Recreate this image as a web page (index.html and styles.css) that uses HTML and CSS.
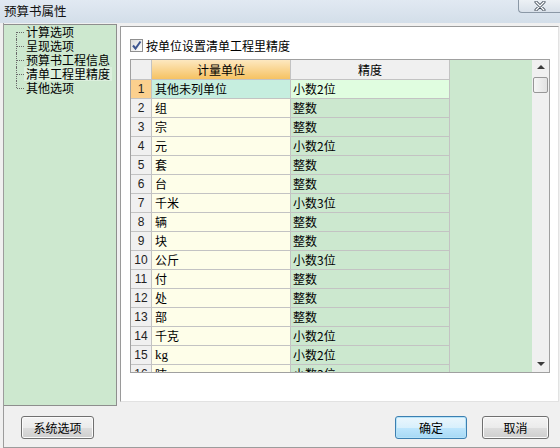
FILE: index.html
```html
<!DOCTYPE html>
<html lang="zh">
<head>
<meta charset="utf-8">
<title>预算书属性</title>
<link rel="stylesheet" href="styles.css">
</head>
<body>
<div class="window">
  <div class="titlebar">
    <span class="title">预算书属性</span>
    <span class="close">
      <svg width="12" height="10" viewBox="0 0 12 10"><path d="M2 1 L10 9 M10 1 L2 9" stroke="#3b4653" stroke-width="3" stroke-linecap="round"/><path d="M2 1 L10 9 M10 1 L2 9" stroke="#ffffff" stroke-width="1.4" stroke-linecap="round"/></svg>
    </span>
  </div>
  <div class="client">
    <div class="main">
      <div class="tree">
        <ul class="tree-list">
          <li class="first">计算选项</li>
          <li>呈现选项</li>
          <li>预算书工程信息</li>
          <li class="sel"><span class="sel-box">清单工程里精度</span></li>
          <li class="last">其他选项</li>
        </ul>
      </div>
      <div class="pane">
        <div class="opt">
          <span class="chk"><svg width="11" height="11" viewBox="0 0 11 11"><path d="M2 5.5 L4.5 8.5 L9.5 1.5" fill="none" stroke="#3d5590" stroke-width="2"/></svg></span>
          <span class="opt-label">按单位设置清单工程里精度</span>
        </div>
        <div class="grid">
          <div class="cols">
            <div class="row head">
              <div class="c num"></div>
              <div class="c unit">计量单位</div>
              <div class="c prec">精度</div>
            </div>
            <div class="row cur">
              <div class="c num">1</div>
              <div class="c unit">其他未列单位</div>
              <div class="c prec">小数2位</div>
            </div>
            <div class="row"><div class="c num">2</div><div class="c unit">组</div><div class="c prec">整数</div></div>
            <div class="row"><div class="c num">3</div><div class="c unit">宗</div><div class="c prec">整数</div></div>
            <div class="row"><div class="c num">4</div><div class="c unit">元</div><div class="c prec">小数2位</div></div>
            <div class="row"><div class="c num">5</div><div class="c unit">套</div><div class="c prec">整数</div></div>
            <div class="row"><div class="c num">6</div><div class="c unit">台</div><div class="c prec">整数</div></div>
            <div class="row"><div class="c num">7</div><div class="c unit">千米</div><div class="c prec">小数3位</div></div>
            <div class="row"><div class="c num">8</div><div class="c unit">辆</div><div class="c prec">整数</div></div>
            <div class="row"><div class="c num">9</div><div class="c unit">块</div><div class="c prec">整数</div></div>
            <div class="row"><div class="c num">10</div><div class="c unit">公斤</div><div class="c prec">小数3位</div></div>
            <div class="row"><div class="c num">11</div><div class="c unit">付</div><div class="c prec">整数</div></div>
            <div class="row"><div class="c num">12</div><div class="c unit">处</div><div class="c prec">整数</div></div>
            <div class="row"><div class="c num">13</div><div class="c unit">部</div><div class="c prec">整数</div></div>
            <div class="row"><div class="c num">14</div><div class="c unit">千克</div><div class="c prec">小数2位</div></div>
            <div class="row"><div class="c num">15</div><div class="c unit latin">kg</div><div class="c prec">小数2位</div></div>
            <div class="row"><div class="c num">16</div><div class="c unit">吨</div><div class="c prec">小数3位</div></div>
          </div>
          <div class="filler"></div>
          <div class="vscroll">
            <span class="arrow up"></span>
            <span class="thumb"></span>
            <span class="track"></span>
            <span class="arrow down"></span>
          </div>
        </div>
      </div>
    </div>
    <div class="footer">
      <button class="btn sys">系统选项</button>
      <span class="spacer"></span>
      <button class="btn ok">确定</button>
      <button class="btn cancel">取消</button>
    </div>
  </div>
</div>
</body>
</html>
```

FILE: styles.css
```css
* { box-sizing: border-box; }
html, body { margin: 0; padding: 0; }
body {
  width: 560px;
  height: 448px;
  overflow: hidden;
  background: #f0f0f0;
  font-family: "Noto Sans CJK SC", "Liberation Sans", sans-serif;
  font-size: 12px;
  color: #000;
}
.window { width: 560px; height: 448px; display: flex; flex-direction: column; }

.titlebar {
  height: 23px;
  flex: none;
  display: flex;
  align-items: flex-start;
  background: linear-gradient(#e1e9f2, #d3dee9);
}
.title { padding: 3px 0 0 4px; line-height: 15px; font-size: 12.5px; color: #111; }
.close {
  margin-left: auto;
  width: 42px;
  height: 14px;
  margin-top: -1px;
  border: 1px solid #8b98a6;
  border-top: none;
  border-right: none;
  border-radius: 0 0 0 4px;
  background: linear-gradient(#eef2f6, #d9e1ea);
  display: flex;
  align-items: center;
  justify-content: center;
}

.client {
  flex: 1;
  margin-left: 3px;
  border-left: 1px solid #9c9c9c;
  border-bottom: 1px solid #9c9c9c;
  display: flex;
  flex-direction: column;
}
.main { display: flex; align-items: flex-start; height: 383px; }

.tree {
  width: 113px;
  height: 382px;
  margin-top: 1px;
  background: #cde8cf;
  border-top: 1px solid #8e8e8e;
  border-right: 1px solid #8e8e8e;
  border-bottom: 1px solid #8e8e8e;
}
.tree-list { list-style: none; margin: 0; padding: 0 0 0 22px; }
.tree-list li { position: relative; height: 14px; line-height: 14px; white-space: nowrap; }
.tree-list li::before {
  content: "";
  position: absolute;
  left: -10px;
  top: 0;
  height: 100%;
  border-left: 1px dotted #6a6a6a;
}
.tree-list li.first::before { top: 50%; height: 50%; }
.tree-list li.last::before { height: 50%; }
.tree-list li::after {
  content: "";
  position: absolute;
  left: -9px;
  top: 7px;
  width: 7px;
  border-top: 1px dotted #6a6a6a;
}
.sel-box { display: inline-block; margin-left: -2px; padding: 0 2px; background: #dcefdd; }

.pane {
  width: 439px;
  height: 376px;
  margin: 3px 0 0 3px;
  background: #fff;
  border-top: 1px solid #9a9a9a;
  border-left: 1px solid #9a9a9a;
  border-right: 1px solid #e2e2e2;
  border-bottom: 1px solid #e2e2e2;
  padding: 11px 0 0 9px;
}
.opt { display: flex; align-items: center; height: 15px; }
.chk {
  width: 13px;
  height: 13px;
  border: 1px solid #8f8f8f;
  background: linear-gradient(135deg, #dcdcdc, #ffffff);
  display: flex;
  align-items: center;
  justify-content: center;
  margin-right: 3px;
}
.opt-label { line-height: 15px; }

.grid {
  margin-top: 6px;
  width: 420px;
  height: 314px;
  border: 1px solid #a0a0a0;
  display: flex;
  overflow: hidden;
}
.cols { width: 319px; flex: none; }
.row { display: flex; height: 19px; border-bottom: 1px solid #c3c3c3; }
.row.head { height: 20px; }
.c { height: 100%; border-right: 1px solid #c3c3c3; line-height: 18px; white-space: nowrap; overflow: hidden; }
.num { width: 21px; text-align: center; background: #f0f0f0; font-family: "Liberation Sans", sans-serif; color: #222; }
.unit { width: 139px; padding-left: 3px; background: #fefee9; }
.prec { width: 159px; padding-left: 2px; background: #cce8cf; }
.latin { font-family: "Liberation Serif", serif; font-size: 13px; }
.head .c { line-height: 19px; text-align: center; padding: 0; }
.head .num { background: #f0f0f0; }
.head .unit { background: linear-gradient(#fde8c0, #f6c262); }
.head .prec { background: #f0f0f0; }
.cur .num { background: #fbd08e; }
.cur .unit { background: #c6eedf; }
.cur .prec { background: #e0fde0; }

.filler { flex: 1; background: #cce8cf; }
.vscroll {
  width: 17px;
  flex: none;
  background: #f0f0f0;
  display: flex;
  flex-direction: column;
  align-items: center;
}
.arrow { width: 0; height: 0; border-left: 4px solid transparent; border-right: 4px solid transparent; }
.arrow.up { margin-top: 5px; border-bottom: 4px solid #3c3c3c; }
.arrow.down { margin-bottom: 6px; border-top: 4px solid #3c3c3c; }
.thumb {
  margin-top: 8px;
  width: 15px;
  height: 16px;
  border: 1px solid #979797;
  border-radius: 2px;
  background: linear-gradient(90deg, #f6f6f6, #e2e2e2);
}
.track { flex: 1; }

.footer { flex: 1; display: flex; align-items: flex-start; padding: 10px 11px 0 17px; }
.spacer { flex: 1; }
.btn {
  height: 23px;
  font-family: "Noto Sans CJK SC", sans-serif;
  font-size: 12px;
  line-height: 20px;
  padding: 0;
  color: #000;
  border: 1px solid #707070;
  border-radius: 3px;
  background: linear-gradient(#f4f4f4 0%, #ebebeb 50%, #dddddd 51%, #cfcfcf 100%);
  box-shadow: inset 0 0 0 1px #fbfbfb;
}
.sys { width: 73px; }
.ok {
  width: 72px;
  margin-right: 15px;
  border-color: #3c7fb1;
  background: linear-gradient(#eaf6fd 0%, #d9f0fc 50%, #bee6fd 51%, #a7d9f5 100%);
  box-shadow: inset 0 0 0 1px #b6e3f8;
}
.cancel { width: 67px; }
```
